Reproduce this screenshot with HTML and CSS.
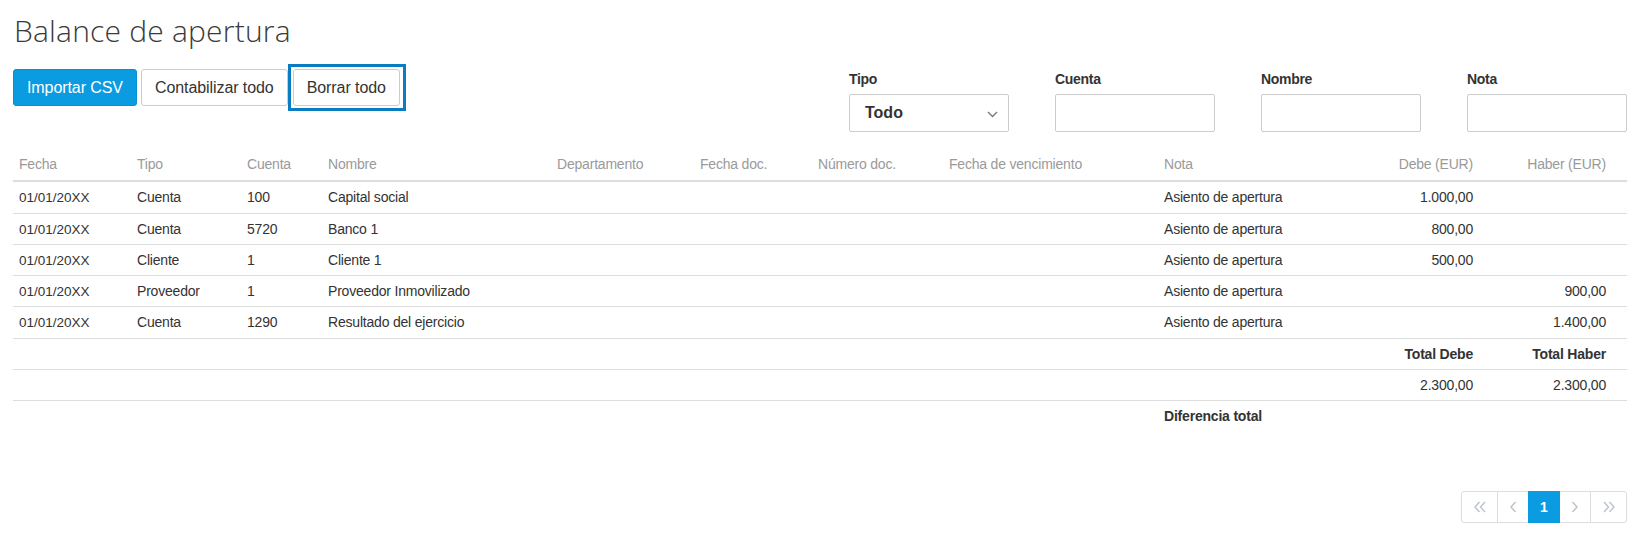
FILE: index.html
```html
<!DOCTYPE html>
<html lang="es">
<head>
<meta charset="utf-8">
<title>Balance de apertura</title>
<link rel="stylesheet" href="styles.css">
</head>
<body>
<div class="page">
  <h1 class="title">Balance de apertura</h1>

  <div class="toolbar">
    <div class="actions">
      <button class="btn btn-primary">Importar CSV</button>
      <button class="btn">Contabilizar todo</button>
      <span class="focus-ring"><button class="btn">Borrar todo</button></span>
    </div>
    <div class="filters">
      <label class="filter">
        <span class="filter-label">Tipo</span>
        <span class="select">
          <span class="select-value">Todo</span>
          <svg class="select-caret" width="11" height="7" viewBox="0 0 11 7"><path d="M1 1l4.5 4.5L10 1" fill="none" stroke="#777" stroke-width="1.3"/></svg>
        </span>
      </label>
      <label class="filter">
        <span class="filter-label">Cuenta</span>
        <span class="input"></span>
      </label>
      <label class="filter">
        <span class="filter-label">Nombre</span>
        <span class="input"></span>
      </label>
      <label class="filter">
        <span class="filter-label">Nota</span>
        <span class="input"></span>
      </label>
    </div>
  </div>

  <table class="grid">
    <colgroup>
      <col class="c-fecha"><col class="c-tipo"><col class="c-cuenta"><col class="c-nombre">
      <col class="c-depto"><col class="c-fdoc"><col class="c-ndoc"><col class="c-venc">
      <col class="c-nota"><col class="c-debe"><col class="c-haber">
    </colgroup>
    <thead>
      <tr>
        <th>Fecha</th><th>Tipo</th><th>Cuenta</th><th>Nombre</th><th>Departamento</th>
        <th>Fecha doc.</th><th>Número doc.</th><th>Fecha de vencimiento</th><th>Nota</th>
        <th class="num">Debe (EUR)</th><th class="num last">Haber (EUR)</th>
      </tr>
    </thead>
    <tbody>
      <tr>
        <td class="date">01/01/20XX</td><td>Cuenta</td><td>100</td><td>Capital social</td><td></td>
        <td></td><td></td><td></td><td>Asiento de apertura</td>
        <td class="num">1.000,00</td><td class="num last"></td>
      </tr>
      <tr>
        <td class="date">01/01/20XX</td><td>Cuenta</td><td>5720</td><td>Banco 1</td><td></td>
        <td></td><td></td><td></td><td>Asiento de apertura</td>
        <td class="num">800,00</td><td class="num last"></td>
      </tr>
      <tr>
        <td class="date">01/01/20XX</td><td>Cliente</td><td>1</td><td>Cliente 1</td><td></td>
        <td></td><td></td><td></td><td>Asiento de apertura</td>
        <td class="num">500,00</td><td class="num last"></td>
      </tr>
      <tr>
        <td class="date">01/01/20XX</td><td>Proveedor</td><td>1</td><td>Proveedor Inmovilizado</td><td></td>
        <td></td><td></td><td></td><td>Asiento de apertura</td>
        <td class="num"></td><td class="num last">900,00</td>
      </tr>
      <tr>
        <td class="date">01/01/20XX</td><td>Cuenta</td><td>1290</td><td>Resultado del ejercicio</td><td></td>
        <td></td><td></td><td></td><td>Asiento de apertura</td>
        <td class="num"></td><td class="num last">1.400,00</td>
      </tr>
    </tbody>
    <tfoot>
      <tr>
        <td colspan="9"></td>
        <td class="num strong">Total Debe</td><td class="num last strong">Total Haber</td>
      </tr>
      <tr>
        <td colspan="9"></td>
        <td class="num">2.300,00</td><td class="num last">2.300,00</td>
      </tr>
      <tr class="no-rule">
        <td colspan="8"></td>
        <td class="strong">Diferencia total</td><td></td><td></td>
      </tr>
    </tfoot>
  </table>

  <nav class="pager">
    <span class="pg">
      <svg width="14" height="12" viewBox="0 0 14 12"><path d="M6.5 1L2 6l4.5 5M12 1L7.5 6l4.5 5" fill="none" stroke="#bfc4cc" stroke-width="1.5"/></svg>
    </span>
    <span class="pg">
      <svg width="8" height="12" viewBox="0 0 8 12"><path d="M6.5 1L2 6l4.5 5" fill="none" stroke="#bfc4cc" stroke-width="1.5"/></svg>
    </span>
    <span class="pg pg-active">1</span>
    <span class="pg">
      <svg width="8" height="12" viewBox="0 0 8 12"><path d="M1.5 1L6 6l-4.5 5" fill="none" stroke="#bfc4cc" stroke-width="1.5"/></svg>
    </span>
    <span class="pg">
      <svg width="14" height="12" viewBox="0 0 14 12"><path d="M2 1l4.5 5L2 11M7.5 1L12 6l-4.5 5" fill="none" stroke="#bfc4cc" stroke-width="1.5"/></svg>
    </span>
  </nav>
</div>
</body>
</html>
```

FILE: styles.css
```css
* {
  box-sizing: border-box;
}

html, body {
  margin: 0;
  background: #fff;
}

body {
  font-family: "Liberation Sans", Arial, sans-serif;
  font-size: 14px;
  color: #333;
}

.page {
  padding: 0 11px 0 13px;
}

/* page heading */
.title {
  margin: 13px 0 0 1px;
  height: 36px;
  font-family: "Open Sans", "Liberation Sans", sans-serif;
  font-weight: 300;
  font-size: 30px;
  line-height: 36px;
  color: #3a3a3a;
  letter-spacing: 0.2px;
}

/* toolbar: action buttons on the left, filters on the right */
.toolbar {
  display: flex;
  justify-content: space-between;
  align-items: flex-start;
}

.actions {
  display: flex;
  align-items: center;
  gap: 4px;
  margin-top: 15px;
}

.btn {
  height: 37px;
  padding: 0 13px;
  border: 1px solid #ccc;
  border-radius: 3px;
  background: #fff;
  color: #333;
  font-family: "Liberation Sans", Arial, sans-serif;
  font-size: 16px;
  letter-spacing: -0.08px;
}

.btn-primary {
  background: #0b9be0;
  border-color: #0a8fd0;
  color: #fff;
  padding: 0 13px;
}

/* keyboard focus frame around the active button */
.focus-ring {
  display: flex;
  padding: 2px 3px 2px 2px;
  border: 3px solid #0a7dc2;
  margin-left: -4px;
}

.filters {
  display: flex;
  gap: 46px;
  margin-top: 20px;
}

.filter {
  display: flex;
  flex-direction: column;
  width: 160px;
}

.filter-label {
  font-weight: bold;
  font-size: 14px;
  line-height: 20px;
  color: #333;
  margin-bottom: 5px;
  letter-spacing: -0.3px;
}

.input,
.select {
  display: flex;
  align-items: center;
  height: 38px;
  border: 1px solid #ccc;
  border-radius: 2px;
  background: #fff;
}

.select {
  justify-content: space-between;
  padding: 0 10px 0 15px;
}

.select-value {
  font-weight: bold;
  font-size: 16px;
  color: #333;
}

.select-caret {
  margin-top: 3px;
}

/* data table */
.grid {
  width: 1614px;
  margin-top: 16px;
  border-collapse: collapse;
  table-layout: fixed;
  letter-spacing: -0.2px;
}

.c-fecha { width: 118px; }
.c-tipo { width: 110px; }
.c-cuenta { width: 81px; }
.c-nombre { width: 229px; }
.c-depto { width: 143px; }
.c-fdoc { width: 118px; }
.c-ndoc { width: 131px; }
.c-venc { width: 215px; }
.c-nota { width: 202px; }
.c-debe { width: 119px; }
.c-haber { width: 148px; }

.grid th,
.grid td {
  padding: 7px 6px;
  line-height: 16.3px;
  text-align: left;
  white-space: nowrap;
}

.grid th {
  padding-top: 8px;
  padding-bottom: 8px;
  font-weight: normal;
  color: #9a9a9a;
  border-bottom: 2px solid #ddd;
}

.grid td {
  border-bottom: 1px solid #ddd;
  color: #333;
}

.grid .num {
  text-align: right;
}

.grid .last {
  padding-right: 21px;
}

.grid td.date {
  font-size: 13.5px;
  color: #333;
  letter-spacing: 0;
  padding-top: 8px;
  padding-bottom: 6px;
}

.grid .strong {
  font-weight: bold;
}

.grid tr.no-rule td {
  border-bottom: none;
}

/* pagination */
.pager {
  display: flex;
  justify-content: flex-end;
  margin-top: 59px;
}

.pg {
  display: flex;
  align-items: center;
  justify-content: center;
  width: 32px;
  height: 32px;
  border: 1px solid #ddd;
  margin-left: -1px;
  background: #fff;
}

.pg:first-child {
  width: 37px;
  border-radius: 3px 0 0 3px;
}

.pg:last-child {
  width: 37px;
  border-radius: 0 3px 3px 0;
}

.pg-active {
  position: relative;
  background: #0b9be0;
  border-color: #0b9be0;
  color: #fff;
  font-weight: bold;
  font-size: 14px;
}
```
